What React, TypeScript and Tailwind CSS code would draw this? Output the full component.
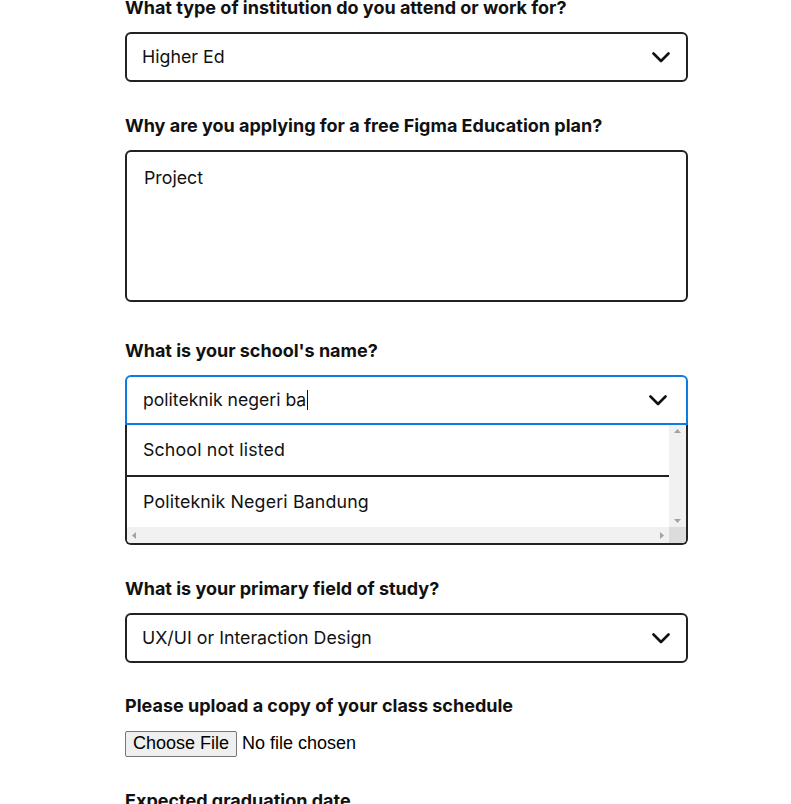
import React from "react";

const font = { fontFamily: "Inter, 'Noto Sans', sans-serif" };

function Chevron() {
  return (
    <svg width="18" height="11" viewBox="0 0 18 11" fill="none" className="shrink-0">
      <path d="M1.5 1.5 L9 9 L16.5 1.5" stroke="#111" strokeWidth="2.6" strokeLinecap="round" strokeLinejoin="round" />
    </svg>
  );
}

function Label({ children, className = "" }: { children: React.ReactNode; className?: string }) {
  return <div className={`text-[18px] font-bold leading-6 text-[#111] ${className}`}>{children}</div>;
}

function Select({ value }: { value: string }) {
  return (
    <div className="mt-3 flex h-[50px] items-center justify-between rounded-md border-2 border-[#222] bg-white pl-[15px] pr-[16px]">
      <span className="text-[17.8px] text-[#111]">{value}</span>
      <Chevron />
    </div>
  );
}

export default function App() {
  return (
    <div className="min-h-screen bg-white" style={font}>
      <div className="ml-[125px] w-[563px]">
        <Label className="-mt-1">What type of institution do you attend or work for?</Label>
        <Select value="Higher Ed" />

        <Label className="mt-8">Why are you applying for a free Figma Education plan?</Label>
        <div className="mt-3 h-[152px] rounded-md border-2 border-[#222] bg-white px-[17px] pt-[13px] text-[17.8px] text-[#111]">
          Project
        </div>

        <Label className="mt-[37px]">What is your school's name?</Label>
        <div className="mt-3">
          <div className="flex h-[50px] items-center justify-between rounded-t-md border-2 border-[#0b7de0] bg-white pl-[16px] pr-[19px]">
            <span className="flex items-center text-[17.6px] text-[#111]">
              politeknik negeri ba
              <span className="ml-[1px] inline-block h-[20px] w-px bg-[#111]" />
            </span>
            <Chevron />
          </div>
          <div className="flex flex-col overflow-hidden rounded-b-md border-x-2 border-b-2 border-[#222] bg-white">
            <div className="flex h-[102px]">
              <div className="flex flex-1 flex-col">
                <div className="flex h-[50px] items-center pl-[16px] text-[17.8px] tracking-[0.15px] text-[#111]">School not listed</div>
                <div className="h-[2px] bg-[#222]" />
                <div className="flex h-[50px] items-center pl-[16px] text-[17.8px] tracking-[0.15px] text-[#111]">Politeknik Negeri Bandung</div>
              </div>
              <div className="flex w-[17px] flex-col items-center justify-between bg-[#f1f1f1] py-[4px]">
                <svg width="7" height="4" viewBox="0 0 7 4"><path d="M3.5 0 L7 4 L0 4 Z" fill="#a3a3a3" /></svg>
                <svg width="7" height="4" viewBox="0 0 7 4"><path d="M0 0 L7 0 L3.5 4 Z" fill="#a3a3a3" /></svg>
              </div>
            </div>
            <div className="flex h-[16px]">
              <div className="flex flex-1 items-center justify-between bg-[#f1f1f1] px-[5px]">
                <svg width="4" height="7" viewBox="0 0 4 7"><path d="M4 0 L4 7 L0 3.5 Z" fill="#a3a3a3" /></svg>
                <svg width="4" height="7" viewBox="0 0 4 7"><path d="M0 0 L4 3.5 L0 7 Z" fill="#a3a3a3" /></svg>
              </div>
              <div className="w-[17px] bg-[#dcdcdc]" />
            </div>
          </div>
        </div>

        <Label className="mt-8">What is your primary field of study?</Label>
        <Select value="UX/UI or Interaction Design" />

        <Label className="mt-[31px]">Please upload a copy of your class schedule</Label>
        <div className="mt-[12px] flex items-center gap-[5px]" style={{ fontFamily: "'Liberation Sans', Arial, sans-serif" }}>
          <span className="flex h-[26px] items-center rounded-[2px] border border-[#767676] bg-[#efefef] px-[7px] text-[18px] text-black">
            Choose File
          </span>
          <span className="text-[18px] text-black">No file chosen</span>
        </div>

        <Label className="mt-[32px]">Expected graduation date</Label>
      </div>
    </div>
  );
}
